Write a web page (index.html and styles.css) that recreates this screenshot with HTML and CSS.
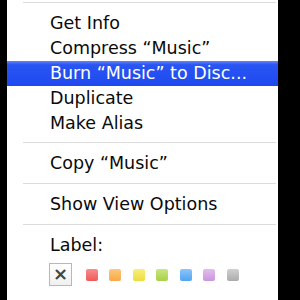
FILE: index.html
```html
<!DOCTYPE html>
<html lang="en">
<head>
    <meta charset="UTF-8">
    <title>Context Menu</title>
    <link rel="stylesheet" href="styles.css">
</head>
<body>
    <div class="menu">
        <div class="separator"></div>
        <div class="item">Get Info</div>
        <div class="item">Compress “Music”</div>
        <div class="item selected">Burn “Music” to Disc...</div>
        <div class="item">Duplicate</div>
        <div class="item">Make Alias</div>
        <div class="separator tight"></div>
        <div class="item">Copy “Music”</div>
        <div class="separator"></div>
        <div class="item">Show View Options</div>
        <div class="separator"></div>
        <div class="item">Label:</div>
        <div class="labels">
            <span class="label-none">×</span>
            <span class="swatch red"></span>
            <span class="swatch orange"></span>
            <span class="swatch yellow"></span>
            <span class="swatch green"></span>
            <span class="swatch blue"></span>
            <span class="swatch purple"></span>
            <span class="swatch gray"></span>
        </div>
    </div>
</body>
</html>
```

FILE: styles.css
```css
html, body {
    margin: 0;
    padding: 0;
    background: #000;
}
.menu {
    margin-left: 7px;
    width: 271px;
    height: 300px;
    background: #fff;
    font-family: "DejaVu Sans", sans-serif;
    font-size: 17.5px;
    color: #0a0a0a;
    padding-top: 2px;
    box-sizing: border-box;
}
.separator {
    height: 1px;
    margin: 0 2px 8px 16px;
    background: #dcdcdc;
}
.item + .separator {
    margin-top: 7px;
}
.item + .separator.tight {
    margin-top: 6px;
}
.item {
    height: 25px;
    line-height: 25px;
    padding-left: 43px;
    white-space: nowrap;
}
.selected {
    background: linear-gradient(#6485f6, #2a55f3 15%, #1d49f0);
    color: #fff;
}
.labels {
    display: flex;
    align-items: center;
    gap: 11.5px;
    padding-left: 42px;
    margin-top: 5px;
}
.label-none {
    width: 21px;
    height: 21px;
    margin-right: 2px;
    border: 1px solid #b8b8b8;
    background: linear-gradient(#fff, #f0f0f0);
    color: #444;
    font-size: 18px;
    font-weight: bold;
    line-height: 20px;
    text-align: center;
}
.swatch {
    width: 12px;
    height: 12px;
    border-radius: 2px;
}
.red { background: linear-gradient(#f98c8c, #ee5a5a); }
.orange { background: linear-gradient(#fdc97c, #f9a847); }
.yellow { background: linear-gradient(#f8ef7e, #eedc3f); }
.green { background: linear-gradient(#cbe681, #a6d148); }
.blue { background: linear-gradient(#8cc6fa, #4fa4f3); }
.purple { background: linear-gradient(#e2bdee, #cb95dd); }
.gray { background: linear-gradient(#d0d0d0, #acacac); }
```
